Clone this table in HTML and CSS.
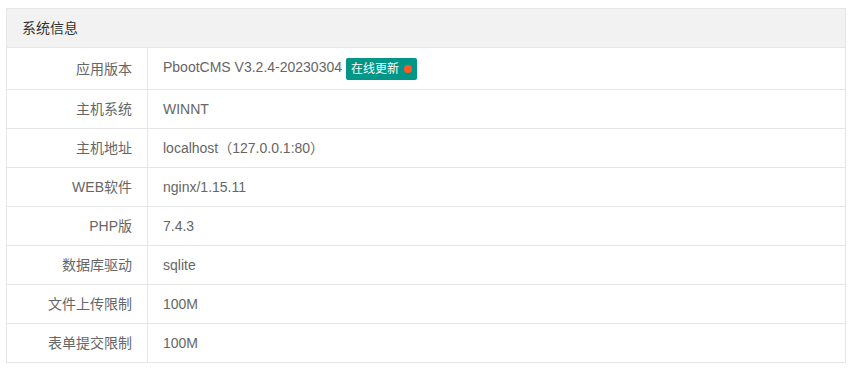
FILE: index.html
```html
<!DOCTYPE html>
<html lang="zh-CN">
<head>
    <meta charset="UTF-8">
    <meta name="viewport" content="width=device-width, initial-scale=1.0">
    <title>系统信息</title>
    <link rel="stylesheet" href="styles.css">
</head>
<body>

    <!-- System info card -->
    <div class="card">
        <div class="card-header">系统信息</div>
        <table class="info-table">
            <tr class="version-row">
                <th>应用版本</th>
                <td>PbootCMS V3.2.4-20230304 <span class="badge">在线更新<span class="dot"></span></span></td>
            </tr>
            <tr>
                <th>主机系统</th>
                <td>WINNT</td>
            </tr>
            <tr>
                <th>主机地址</th>
                <td>localhost（127.0.0.1:80）</td>
            </tr>
            <tr>
                <th>WEB软件</th>
                <td>nginx/1.15.11</td>
            </tr>
            <tr>
                <th>PHP版</th>
                <td>7.4.3</td>
            </tr>
            <tr>
                <th>数据库驱动</th>
                <td>sqlite</td>
            </tr>
            <tr>
                <th>文件上传限制</th>
                <td>100M</td>
            </tr>
            <tr>
                <th>表单提交限制</th>
                <td>100M</td>
            </tr>
        </table>
    </div>

</body>
</html>
```

FILE: styles.css
```css
body {
    margin: 8px 5px 8px 6px;
    font-family: "Liberation Sans", "Noto Sans CJK SC", sans-serif;
    font-size: 14px;
    color: #666;
    background: #fff;
}

/* Card wrapper */
.card {
    border: 1px solid #e6e6e6;
}

.card-header {
    height: 38px;
    line-height: 38px;
    padding: 0 15px;
    background-color: #f2f2f2;
    border-bottom: 1px solid #e6e6e6;
    color: #333;
}

/* Key / value table */
.info-table {
    width: 100%;
    border-collapse: collapse;
}

.info-table tr + tr th,
.info-table tr + tr td {
    border-top: 1px solid #e6e6e6;
}

.info-table th,
.info-table td {
    height: 20px;
    padding: 9px 15px;
    line-height: 20px;
    font-weight: normal;
    text-align: left;
}

.info-table th {
    width: 110px;
    text-align: right;
    border-right: 1px solid #e6e6e6;
}

.info-table .version-row th,
.info-table .version-row td {
    height: 23px;
}

/* Update badge */
.badge {
    display: inline-block;
    height: 22px;
    line-height: 22px;
    padding: 0 5px;
    border-radius: 2px;
    background-color: #009688;
    color: #fff;
    font-size: 12px;
    vertical-align: middle;
}

.dot {
    display: inline-block;
    width: 8px;
    height: 8px;
    margin-left: 5px;
    border-radius: 50%;
    background-color: #ff5722;
    vertical-align: 0;
}
```
